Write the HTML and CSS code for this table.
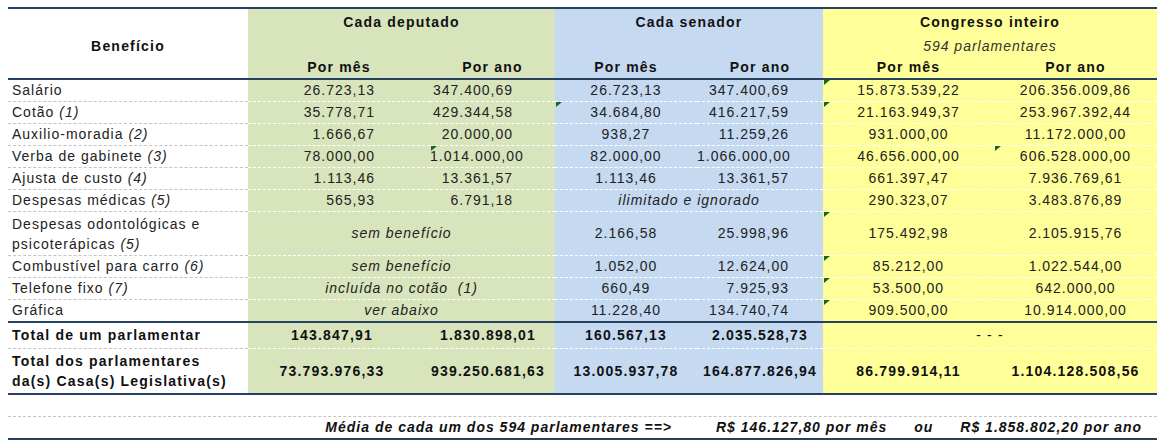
FILE: index.html
```html
<!DOCTYPE html>
<html lang="pt">
<head>
<meta charset="utf-8">
<title>Benefícios parlamentares</title>
<link rel="stylesheet" href="styles.css">
</head>
<body>
<table class="tbl">
  <colgroup>
    <col class="c0"><col class="c1"><col class="c2"><col class="c3"><col class="c4"><col class="c5"><col class="c6">
  </colgroup>
  <thead>
    <tr class="h1">
      <th class="top bottom lab" rowspan="3">Benefício</th>
      <th class="top g" colspan="2">Cada deputado</th>
      <th class="top b" colspan="2">Cada senador</th>
      <th class="top y" colspan="2">Congresso inteiro</th>
    </tr>
    <tr class="h2">
      <th class="g" colspan="2"></th>
      <th class="b" colspan="2"></th>
      <th class="y sub" colspan="2">594 parlamentares</th>
    </tr>
    <tr class="h3">
      <th class="bottom g">Por mês</th>
      <th class="bottom g">Por ano</th>
      <th class="bottom b">Por mês</th>
      <th class="bottom b">Por ano</th>
      <th class="bottom y">Por mês</th>
      <th class="bottom y">Por ano</th>
    </tr>
  </thead>
  <tbody>
    <tr class="row">
      <td class="lab">Salário</td>
      <td class="g dm">26.723,13</td><td class="g da">347.400,69</td>
      <td class="b sm">26.723,13</td><td class="b sa">347.400,69</td>
      <td class="y mark">15.873.539,22</td><td class="y">206.356.009,86</td>
    </tr>
    <tr class="row">
      <td class="lab">Cotão <i>(1)</i></td>
      <td class="g dm">35.778,71</td><td class="g da">429.344,58</td>
      <td class="b sm mark">34.684,80</td><td class="b sa">416.217,59</td>
      <td class="y mark">21.163.949,37</td><td class="y">253.967.392,44</td>
    </tr>
    <tr class="row">
      <td class="lab">Auxilio-moradia <i>(2)</i></td>
      <td class="g dm">1.666,67</td><td class="g da">20.000,00</td>
      <td class="b sm">938,27</td><td class="b sa">11.259,26</td>
      <td class="y">931.000,00</td><td class="y">11.172.000,00</td>
    </tr>
    <tr class="row">
      <td class="lab">Verba de gabinete <i>(3)</i></td>
      <td class="g dm">78.000,00</td><td class="g da mark">1.014.000,00</td>
      <td class="b sm">82.000,00</td><td class="b sa">1.066.000,00</td>
      <td class="y">46.656.000,00</td><td class="y mark">606.528.000,00</td>
    </tr>
    <tr class="row">
      <td class="lab">Ajusta de custo <i>(4)</i></td>
      <td class="g dm">1.113,46</td><td class="g da">13.361,57</td>
      <td class="b sm">1.113,46</td><td class="b sa">13.361,57</td>
      <td class="y">661.397,47</td><td class="y">7.936.769,61</td>
    </tr>
    <tr class="row">
      <td class="lab">Despesas médicas <i>(5)</i></td>
      <td class="g dm">565,93</td><td class="g da">6.791,18</td>
      <td class="b note" colspan="2">ilimitado e ignorado</td>
      <td class="y">290.323,07</td><td class="y">3.483.876,89</td>
    </tr>
    <tr class="row two">
      <td class="lab">Despesas odontológicas e<br>psicoterápicas <i>(5)</i></td>
      <td class="g note" colspan="2">sem benefício</td>
      <td class="b sm">2.166,58</td><td class="b sa">25.998,96</td>
      <td class="y mark">175.492,98</td><td class="y">2.105.915,76</td>
    </tr>
    <tr class="row">
      <td class="lab">Combustível para carro <i>(6)</i></td>
      <td class="g note" colspan="2">sem benefício</td>
      <td class="b sm">1.052,00</td><td class="b sa">12.624,00</td>
      <td class="y mark">85.212,00</td><td class="y">1.022.544,00</td>
    </tr>
    <tr class="row">
      <td class="lab">Telefone fixo <i>(7)</i></td>
      <td class="g note" colspan="2">incluída no cotão &nbsp;(1)</td>
      <td class="b sm">660,49</td><td class="b sa">7.925,93</td>
      <td class="y mark">53.500,00</td><td class="y">642.000,00</td>
    </tr>
    <tr class="row last">
      <td class="lab">Gráfica</td>
      <td class="g note" colspan="2">ver abaixo</td>
      <td class="b sm">11.228,40</td><td class="b sa">134.740,74</td>
      <td class="y mark">909.500,00</td><td class="y">10.914.000,00</td>
    </tr>
    <tr class="row tot1">
      <td class="lab">Total de um parlamentar</td>
      <td class="g tdm">143.847,91</td><td class="g tda">1.830.898,01</td>
      <td class="b">160.567,13</td><td class="b">2.035.528,73</td>
      <td class="y dash" colspan="2">- - -</td>
    </tr>
    <tr class="row tot2 last">
      <td class="lab">Total dos parlamentares<br>da(s) Casa(s) Legislativa(s)</td>
      <td class="g tdm">73.793.976,33</td><td class="g tda">939.250.681,63</td>
      <td class="b">13.005.937,78</td><td class="b">164.877.826,94</td>
      <td class="y">86.799.914,11</td><td class="y">1.104.128.508,56</td>
    </tr>
    <tr class="row empty">
      <td colspan="7"></td>
    </tr>
    <tr class="row avg last">
      <td class="avg-l" colspan="4">Média de cada um dos 594 parlamentares ==&gt;</td>
      <td class="avg-r" colspan="3">
        <div class="avgline">
          <span class="a1">R$ 146.127,80 por mês</span>
          <span class="a2">ou</span>
          <span class="a3">R$ 1.858.802,20 por ano</span>
        </div>
      </td>
    </tr>
  </tbody>
</table>
</body>
</html>
```

FILE: styles.css
```css
html, body {
  margin: 0;
  padding: 0;
  background: #ffffff;
}

body {
  padding: 7px 0 0 8px;
  font-family: "Liberation Sans", Arial, sans-serif;
  font-size: 14px;
  letter-spacing: 1px;
  color: #222222;
}

.tbl {
  border-collapse: separate;
  border-spacing: 0;
  table-layout: fixed;
  width: 1149px;
}

.c0 { width: 240px; }
.c1 { width: 182px; }
.c2 { width: 125px; }
.c3 { width: 142px; }
.c4 { width: 126px; }
.c5 { width: 171px; }
.c6 { width: 163px; }

th, td {
  padding: 0;
  white-space: nowrap;
  text-align: center;
  vertical-align: middle;
}

th {
  font-weight: bold;
  color: #111;
  letter-spacing: 1.2px;
}

.g { background: #d8e4bc; }
.b { background: #c5d9f1; }
.y { background: #ffff99; }

.top { border-top: 2px solid #26405f; }
.bottom { border-bottom: 2px solid #26405f; }

.h1 th { height: 26px; line-height: 26px; }
.h2 th { height: 22px; line-height: 22px; }
.h3 th { height: 21px; line-height: 21px; }

th.lab { padding-top: 4px; }

.sub {
  font-weight: normal;
  font-style: italic;
  color: #333;
  letter-spacing: 1px;
}

.row td {
  line-height: 21px;
  border-bottom: 1px dashed #c4c4c4;
}

.row td.g,
.row td.b,
.row td.y {
  border-bottom-color: #ffffff;
}

.row.last td {
  border-bottom: 2px solid #26405f;
}

td.lab {
  text-align: left;
  padding-left: 4px;
}

td.dm { text-align: right; padding-right: 55px; }
td.da { text-align: right; padding-right: 42px; }
td.sa { text-align: right; padding-right: 34px; }
td.sm { text-align: center; }

td.note { font-style: italic; }

td.mark { position: relative; }
td.mark::before {
  content: "";
  position: absolute;
  left: 1px;
  top: 0;
  width: 0;
  height: 0;
  border-top: 5px solid #1a661a;
  border-right: 6px solid transparent;
}

.two td.lab { line-height: 20px; padding-top: 2px; padding-bottom: 1px; }

.tot1 td, .tot2 td {
  font-weight: bold;
  color: #111;
  letter-spacing: 1.2px;
}
.tot1 td { line-height: 25px; }
.tot2 td.lab { line-height: 20px; padding-top: 2px; padding-bottom: 2px; }
.tot1 td.tdm, .tot2 td.tdm { padding-right: 14px; }
.tot1 td.tda, .tot2 td.tda { padding-right: 9px; }

td.dash { font-weight: normal; }

.empty td { height: 21px; }

.avg td {
  font-weight: bold;
  font-style: italic;
  color: #111;
}

td.avg-l {
  text-align: right;
  padding-right: 25px;
}

.avgline {
  display: flex;
  align-items: center;
  gap: 27px;
  padding-left: 19px;
}
```
